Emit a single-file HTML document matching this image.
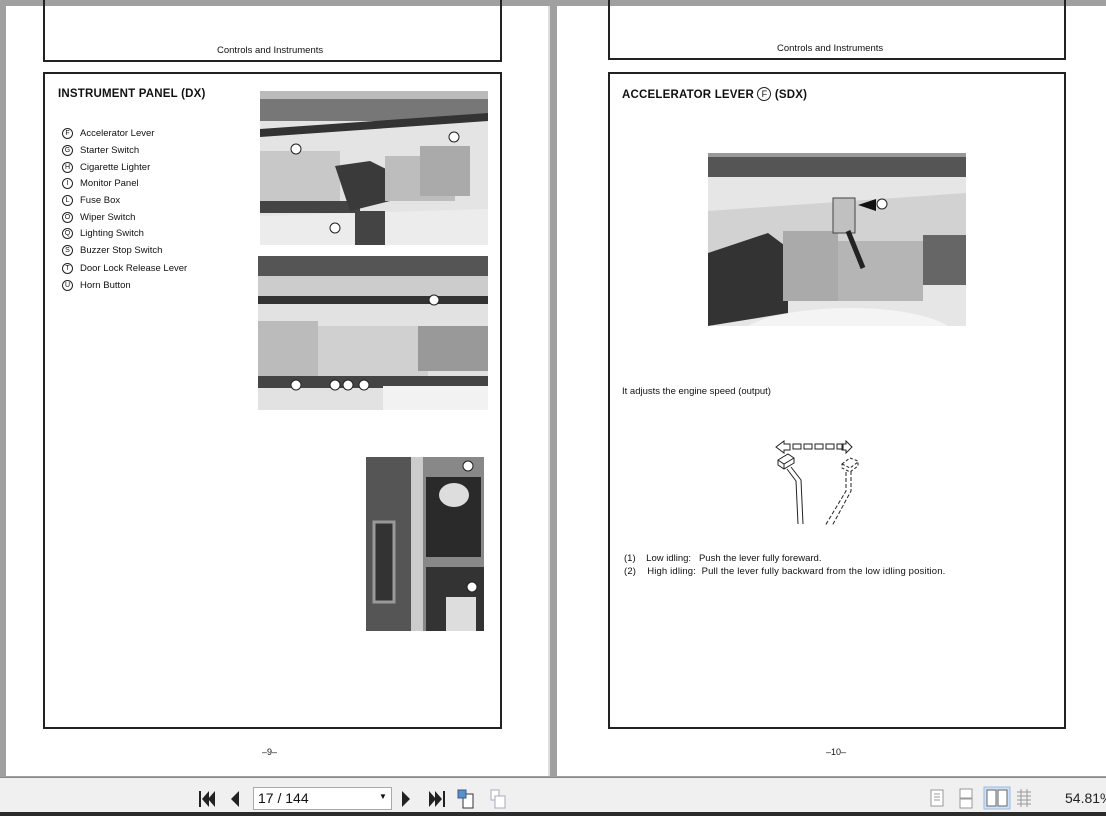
<!DOCTYPE html>
<html><head><meta charset="utf-8">
<style>
*{margin:0;padding:0;box-sizing:border-box}
html,body{width:1106px;height:816px;overflow:hidden;background:#a0a0a0;font-family:"Liberation Sans",sans-serif;color:#111}
.abs{position:absolute}
.page{position:absolute;background:#fff}
.box{position:absolute;border:2px solid #222}
.t{position:absolute;white-space:nowrap}
.li{position:absolute;left:62px;font-size:9.5px;white-space:nowrap}
.li i{display:inline-block;width:11px;height:11px;border:1px solid #222;border-radius:50%;font-style:normal;font-size:7px;text-align:center;line-height:10px;margin-right:7px;vertical-align:middle}
.tb{position:absolute;left:0;top:777px;width:1106px;height:36px;background:#f0f0f0;border-top:1px solid #888}
</style></head><body>
<div class="page" style="left:6px;top:6px;width:544px;height:770px"></div>
<div class="page" style="left:557px;top:6px;width:549px;height:770px"></div>
<div class="abs" style="left:548px;top:6px;width:2px;height:770px;background:#ddd"></div>

<!-- page 1 -->
<div class="box" style="left:43px;top:0;width:459px;height:62px;border-top:none"></div>
<div class="t" style="left:217px;top:45px;font-size:9.5px">Controls and Instruments</div>
<div class="box" style="left:43px;top:72px;width:459px;height:657px"></div>
<div class="t" style="left:58px;top:88px;font-size:11.5px;font-weight:bold;letter-spacing:.2px">INSTRUMENT PANEL (DX)</div>
<div class="li" style="top:128px"><i>F</i>Accelerator Lever</div>
<div class="li" style="top:145px"><i>G</i>Starter Switch</div>
<div class="li" style="top:162px"><i>H</i>Cigarette Lighter</div>
<div class="li" style="top:178px"><i>I</i>Monitor Panel</div>
<div class="li" style="top:195px"><i>L</i>Fuse Box</div>
<div class="li" style="top:212px"><i>O</i>Wiper Switch</div>
<div class="li" style="top:228px"><i>Q</i>Lighting Switch</div>
<div class="li" style="top:245px"><i>S</i>Buzzer Stop Switch</div>
<div class="li" style="top:263px"><i>T</i>Door Lock Release Lever</div>
<div class="li" style="top:280px"><i>U</i>Horn Button</div>

<svg class="abs" style="left:260px;top:91px" width="228" height="154">
<rect width="228" height="154" fill="#e4e4e4"/>
<rect width="228" height="30" fill="#777"/>
<rect y="0" width="228" height="8" fill="#bbb"/>
<path d="M0 38 L228 22 L228 30 L0 46Z" fill="#333"/>
<rect x="0" y="60" width="80" height="55" fill="#c8c8c8"/>
<rect x="0" y="110" width="100" height="12" fill="#444"/>
<path d="M75 75 L110 70 L130 80 L130 110 L90 120Z" fill="#3a3a3a"/>
<rect x="125" y="65" width="70" height="45" fill="#bdbdbd"/>
<rect x="160" y="55" width="50" height="50" fill="#aaa"/>
<path d="M0 125 L228 118 L228 154 L0 154Z" fill="#ececec"/>
<rect x="95" y="120" width="30" height="34" fill="#444"/>
<circle cx="36" cy="58" r="5" fill="#fff" stroke="#222"/><circle cx="194" cy="46" r="5" fill="#fff" stroke="#222"/><circle cx="75" cy="137" r="5" fill="#fff" stroke="#222"/>
</svg>
<svg class="abs" style="left:258px;top:256px" width="230" height="154">
<rect width="230" height="154" fill="#e2e2e2"/>
<rect width="230" height="20" fill="#555"/>
<rect y="20" width="230" height="22" fill="#ccc"/>
<rect y="40" width="230" height="8" fill="#333"/>
<rect x="0" y="65" width="60" height="55" fill="#bbb"/>
<rect x="60" y="70" width="110" height="55" fill="#d0d0d0"/>
<rect x="160" y="70" width="70" height="45" fill="#999"/>
<rect x="0" y="120" width="230" height="12" fill="#444"/>
<rect x="125" y="130" width="105" height="24" fill="#f2f2f2"/>
<circle cx="38" cy="129" r="5" fill="#fff" stroke="#222"/><circle cx="77" cy="129" r="5" fill="#fff" stroke="#222"/><circle cx="90" cy="129" r="5" fill="#fff" stroke="#222"/><circle cx="106" cy="129" r="5" fill="#fff" stroke="#222"/><circle cx="176" cy="44" r="5" fill="#fff" stroke="#222"/>
</svg>
<svg class="abs" style="left:366px;top:457px" width="118" height="174">
<rect width="118" height="174" fill="#888"/>
<rect width="45" height="174" fill="#555"/>
<rect x="8" y="65" width="20" height="80" fill="#333" stroke="#999" stroke-width="3"/>
<rect x="45" y="0" width="12" height="174" fill="#ccc"/>
<rect x="60" y="20" width="55" height="80" fill="#2a2a2a"/>
<ellipse cx="88" cy="38" rx="15" ry="12" fill="#ddd"/>
<rect x="60" y="110" width="58" height="64" fill="#333"/>
<rect x="80" y="140" width="30" height="34" fill="#ddd"/>
<circle cx="102" cy="9" r="5" fill="#fff" stroke="#222"/><circle cx="106" cy="130" r="5" fill="#fff" stroke="#222"/>
</svg>
<div class="t" style="left:262px;top:747px;font-size:9px">–9–</div>

<!-- page 2 -->
<div class="box" style="left:608px;top:0;width:458px;height:60px;border-top:none"></div>
<div class="t" style="left:777px;top:43px;font-size:9.5px">Controls and Instruments</div>
<div class="box" style="left:608px;top:72px;width:458px;height:657px"></div>
<div class="t" style="left:622px;top:87px;font-size:11.5px;font-weight:bold;letter-spacing:.2px">ACCELERATOR LEVER <span style="display:inline-block;width:14px;height:14px;border:1px solid #222;border-radius:50%;font-size:9px;font-weight:normal;text-align:center;line-height:12px;vertical-align:1px">F</span> (SDX)</div>
<svg class="abs" style="left:708px;top:153px" width="258" height="173">
<rect width="258" height="173" fill="#e6e6e6"/>
<rect width="258" height="24" fill="#555"/>
<rect y="0" width="258" height="4" fill="#999"/>
<path d="M0 58 L258 40 L258 120 L0 120Z" fill="#d2d2d2"/>
<path d="M0 100 L60 80 L80 95 L80 160 L0 173Z" fill="#333"/>
<rect x="75" y="78" width="55" height="70" fill="#aaa"/>
<rect x="130" y="88" width="85" height="60" fill="#b5b5b5"/>
<rect x="125" y="45" width="22" height="35" fill="#c0c0c0" stroke="#444"/>
<path d="M140 78 L155 115" stroke="#222" stroke-width="5"/>
<rect x="215" y="82" width="43" height="50" fill="#666"/>
<path d="M40 173 C80 150 200 148 240 173Z" fill="#f4f4f4"/>
<path d="M150 52 L168 46 L168 58Z" fill="#111"/>
<circle cx="174" cy="51" r="5" fill="#fff" stroke="#222"/>
</svg>
<div class="t" style="left:622px;top:386px;font-size:9.5px">It adjusts the engine speed (output)</div>
<svg class="abs" style="left:770px;top:436px" width="100" height="92" fill="none" stroke="#222" stroke-width="1">
<path d="M6 11 L14 5 L14 8 L20 8 L20 14 L14 14 L14 17Z"/>
<rect x="23" y="8" width="8" height="5"/><rect x="34" y="8" width="8" height="5"/><rect x="45" y="8" width="8" height="5"/><rect x="56" y="8" width="8" height="5"/><rect x="67" y="8" width="6" height="5"/>
<path d="M76 8 L76 5 L82 11 L76 17 L76 14 L72 14 L72 8Z"/>
<path d="M8 24 L18 18 L24 22 L24 27 L14 33 L8 29Z M8 24 L14 28 L24 22 M14 28 L14 33"/>
<path d="M17 33 L26 45 L28 88 M21 31 L31 44 L33 88"/>
<path d="M72 28 L80 22 L88 25 L88 30 L80 36 L72 32Z M72 28 L80 32 L88 26" stroke-dasharray="3,2"/>
<path d="M76 36 L76 55 L55 90 M81 35 L81 55 L62 90" stroke-dasharray="4,2"/>
</svg>
<div class="t" style="left:624px;top:553px;font-size:9.5px">(1)&nbsp;&nbsp;&nbsp; Low idling:&nbsp;&nbsp; Push the lever fully foreward.</div>
<div class="t" style="left:624px;top:566px;font-size:9.5px;letter-spacing:.15px">(2)&nbsp;&nbsp;&nbsp; High idling:&nbsp; Pull the lever fully backward from the low idling position.</div>
<div class="t" style="left:826px;top:747px;font-size:9px">–10–</div>

<!-- toolbar -->
<div class="tb"></div>
<div class="abs" style="left:0;top:812px;width:1106px;height:4px;background:#2b2b2b"></div>
<svg class="abs" style="left:195px;top:788px" width="320" height="22">
<g fill="#222">
<rect x="4" y="3" width="2" height="16"/><path d="M14 3 L7 11 L14 19Z"/><path d="M20 3 L13 11 L20 19Z"/>
<path d="M44 3 L36 11 L44 19Z"/>
<path d="M207 3 L215 11 L207 19Z"/>
<path d="M234 3 L241 11 L234 19Z"/><path d="M240 3 L247 11 L240 19Z"/><rect x="248" y="3" width="2" height="16"/>
</g>
<g fill="none" stroke="#333"><rect x="268" y="6" width="10" height="14" fill="#fff"/><rect x="263" y="2" width="8" height="8" fill="#5b8fc7" stroke="#2e5e92"/></g>
<g fill="none" stroke="#aab"><rect x="296" y="2" width="8" height="10" fill="#fff"/><rect x="300" y="8" width="10" height="12" fill="#fff"/></g>
</svg>
<div class="abs" style="left:253px;top:787px;width:139px;height:23px;background:#fff;border:1px solid #aaa"></div>
<div class="t" style="left:258px;top:790px;font-size:14px">17 / 144</div>
<div class="t" style="left:379px;top:792px;font-size:8px">▼</div>
<svg class="abs" style="left:925px;top:786px" width="115" height="24" fill="none" stroke="#999">
<rect x="6" y="4" width="12" height="16" fill="#fff"/><path d="M9 8h6M9 11h6M9 14h6"/>
<rect x="35" y="3" width="12" height="9" fill="#fff"/><rect x="35" y="13" width="12" height="9" fill="#fff"/>
<rect x="59" y="1" width="26" height="22" fill="#cde0f5" stroke="#9bbbe0"/><rect x="62" y="4" width="9" height="16" fill="#fff" stroke="#666"/><rect x="73" y="4" width="9" height="16" fill="#fff" stroke="#666"/>
<path d="M96 3v18M102 3v18M92 6h14M92 10h14M92 14h14M92 18h14"/>
</svg>
<div class="t" style="left:1065px;top:790px;font-size:14px;color:#222">54.81%</div>
</body></html>
